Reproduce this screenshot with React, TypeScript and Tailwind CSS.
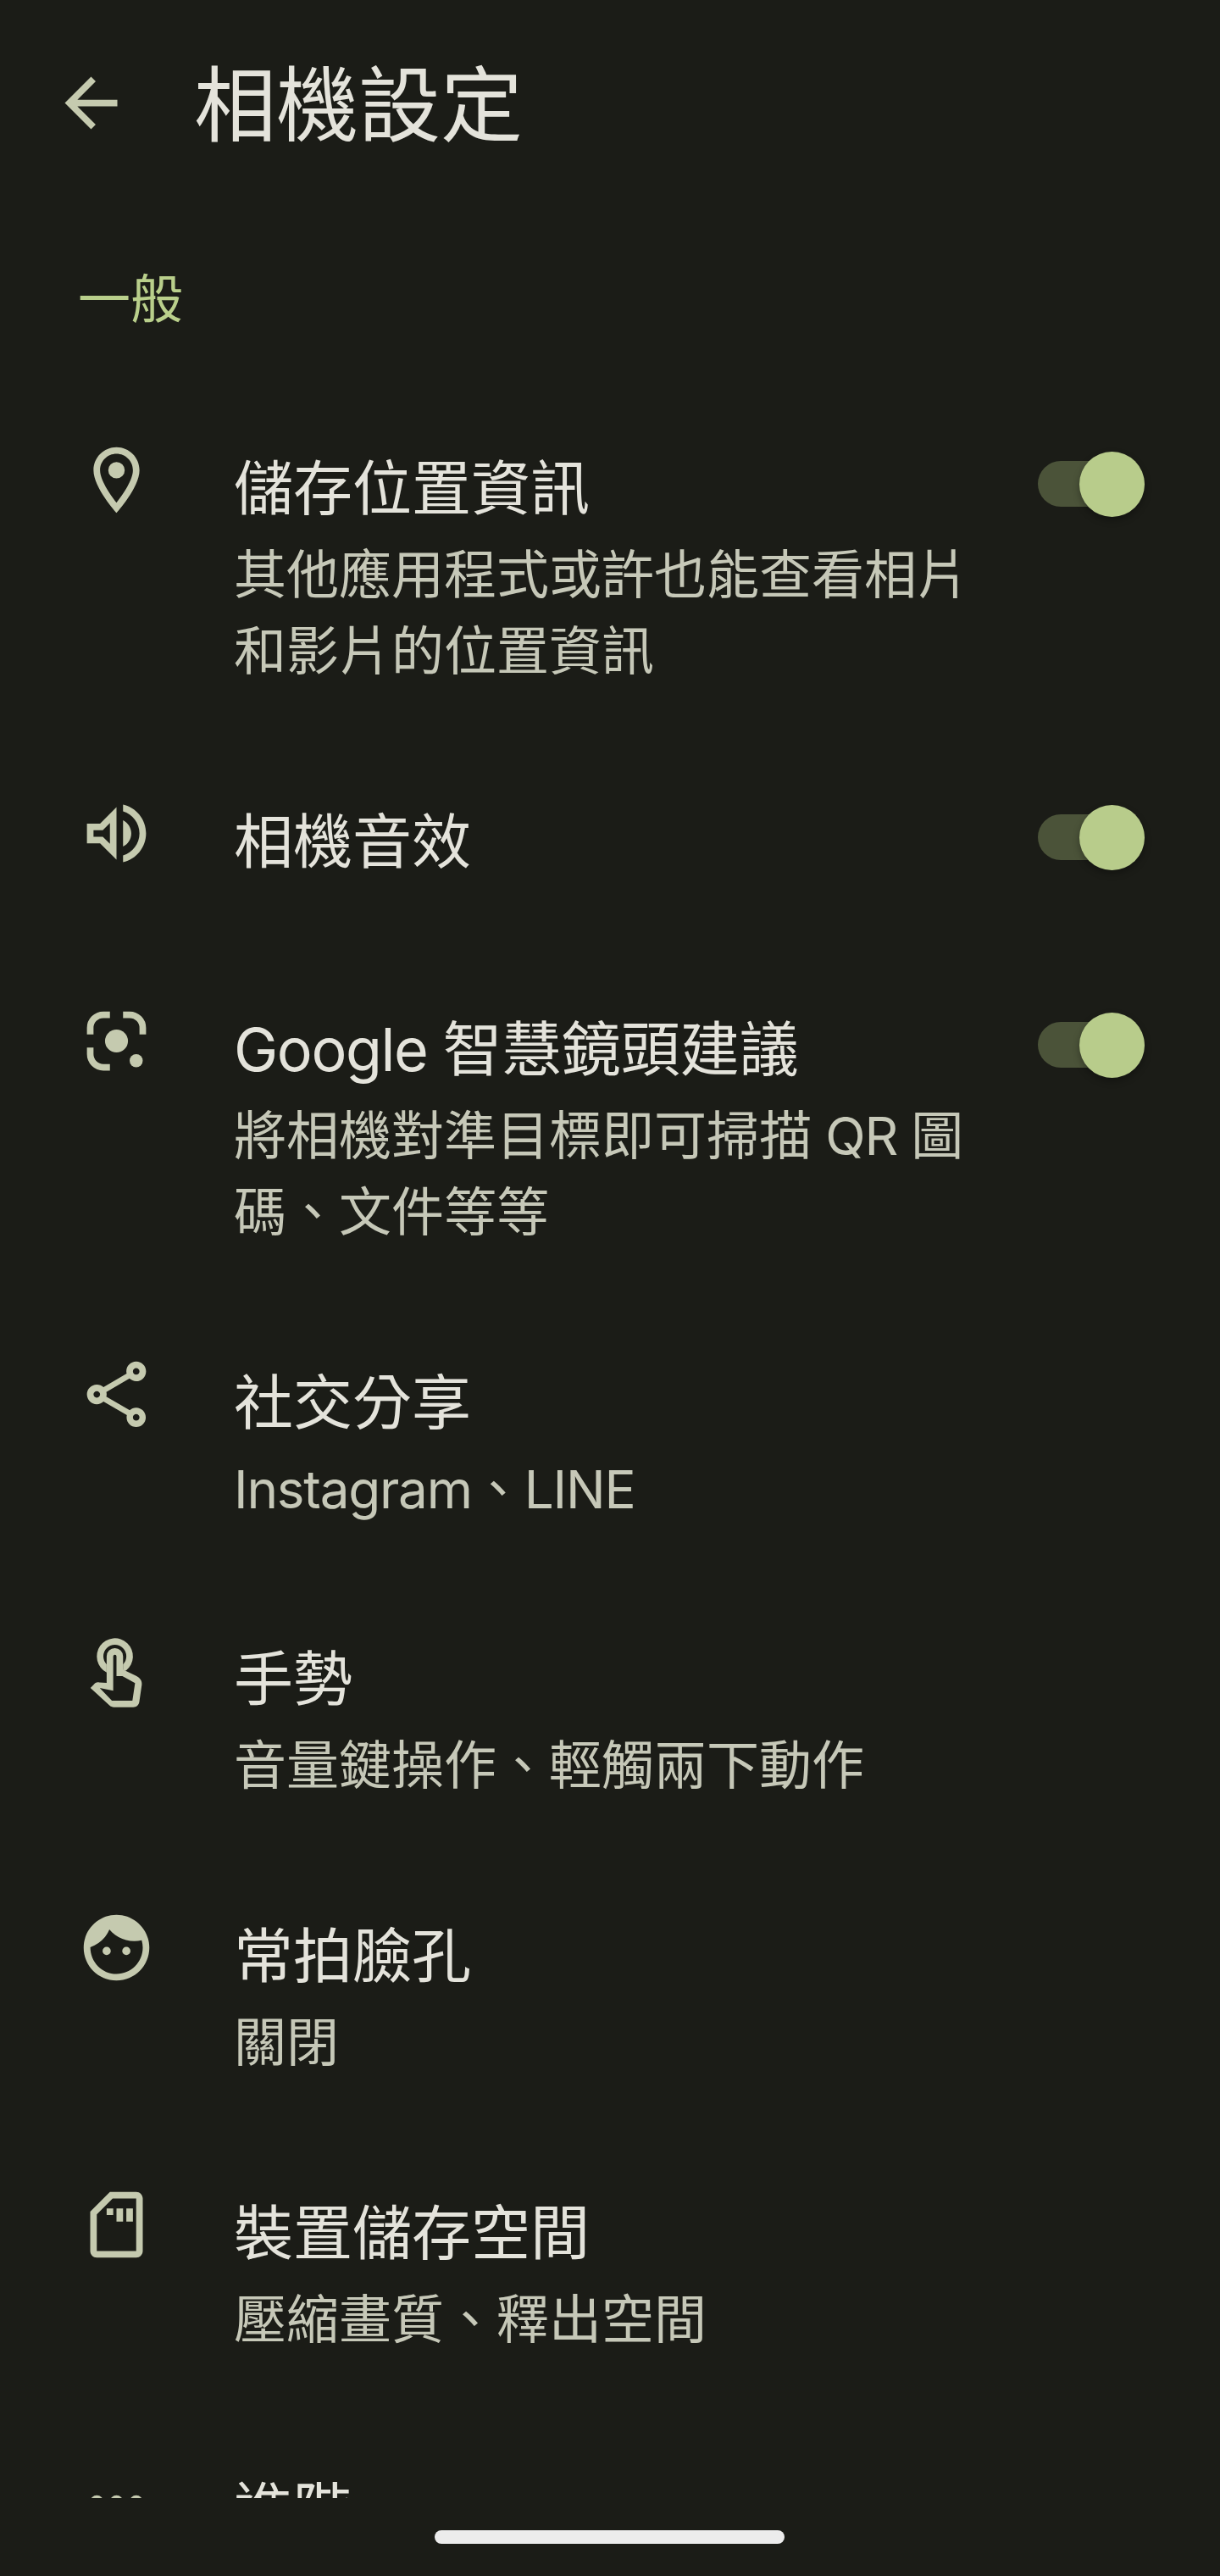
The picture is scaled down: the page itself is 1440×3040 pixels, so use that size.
import { useState, type ReactNode } from "react"
import clsx from "clsx"

interface SettingItem {
  id: string
  icon: ReactNode
  title: ReactNode
  summary?: ReactNode
  toggle?: boolean
}

function Icon({ children, className }: { children: ReactNode; className?: string }) {
  return (
    <svg
      viewBox="0 0 24 24"
      fill="currentColor"
      aria-hidden="true"
      className={clsx("h-[93px] w-[93px] shrink-0 overflow-visible text-[#c5caaf]", className)}
    >
      {children}
    </svg>
  )
}

function Latin({ children }: { children: ReactNode }) {
  return <span className="tracking-[-0.02em]">{children}</span>
}

const settings: SettingItem[] = [
  {
    id: "location",
    icon: (
      <Icon>
        <path d="M12 2C8.13 2 5 5.13 5 9c0 5.25 7 13 7 13s7-7.75 7-13c0-3.87-3.13-7-7-7zM7 9c0-2.76 2.24-5 5-5s5 2.24 5 5c0 2.88-2.88 7.19-5 9.88C9.92 16.21 7 11.85 7 9z" />
        <circle cx="12" cy="9" r="2.5" />
      </Icon>
    ),
    title: "儲存位置資訊",
    summary: (
      <>
        其他應用程式或許也能查看相片
        <br />
        和影片的位置資訊
      </>
    ),
    toggle: true,
  },
  {
    id: "sound",
    icon: (
      <Icon>
        <path d="M3 9v6h4l5 5V4L7 9H3zm7-.17v6.34L7.83 13H5v-2h2.83L10 8.83zM16.5 12c0-1.77-1.02-3.29-2.5-4.03v8.05c1.48-.73 2.5-2.25 2.5-4.02zM14 3.23v2.06c2.89.86 5 3.54 5 6.71s-2.11 5.85-5 6.71v2.06c4.01-.91 7-4.49 7-8.77 0-4.28-2.99-7.86-7-8.77z" />
      </Icon>
    ),
    title: "相機音效",
    toggle: true,
  },
  {
    id: "lens",
    icon: (
      <Icon>
        <path
          d="M4 10V8a4 4 0 0 1 4-4h2M14 4h2a4 4 0 0 1 4 4v2M4 14v2a4 4 0 0 0 4 4h2"
          fill="none"
          stroke="currentColor"
          strokeWidth="2"
        />
        <circle cx="12" cy="12" r="3.5" />
        <circle cx="18" cy="18" r="2" />
      </Icon>
    ),
    title: (
      <>
        <Latin>Google </Latin>智慧鏡頭建議
      </>
    ),
    summary: (
      <>
        將相機對準目標即可掃描<Latin> QR </Latin>圖
        <br />
        碼、文件等等
      </>
    ),
    toggle: true,
  },
  {
    id: "share",
    icon: (
      <Icon>
        <path d="M18 16.08c-.76 0-1.44.3-1.96.77L8.91 12.7c.05-.23.09-.46.09-.7s-.04-.47-.09-.7l7.05-4.11c.54.5 1.25.81 2.04.81 1.66 0 3-1.34 3-3s-1.34-3-3-3-3 1.34-3 3c0 .24.04.47.09.7L8.04 9.81C7.5 9.31 6.79 9 6 9c-1.66 0-3 1.34-3 3s1.34 3 3 3c.79 0 1.5-.31 2.04-.81l7.12 4.16c-.05.21-.08.43-.08.65 0 1.61 1.31 2.92 2.92 2.92s2.92-1.31 2.92-2.92-1.31-2.92-2.92-2.92zM18 4c.55 0 1 .45 1 1s-.45 1-1 1-1-.45-1-1 .45-1 1-1zM6 13c-.55 0-1-.45-1-1s.45-1 1-1 1 .45 1 1-.45 1-1 1zm12 7.02c-.55 0-1-.45-1-1s.45-1 1-1 1 .45 1 1-.45 1-1 1z" />
      </Icon>
    ),
    title: "社交分享",
    summary: (
      <>
        <Latin>Instagram</Latin>、<Latin>LINE</Latin>
      </>
    ),
  },
  {
    id: "gesture",
    icon: (
      <Icon>
        <g transform="translate(0 1.15)">
          <path d="M9 8.95V11.4A5.5 5.5 0 1 1 14.9 10.83L14 11V8.95A3.5 3.5 0 1 0 9 8.95z" />
          <path
            fillRule="evenodd"
            d="M9 14.6V6.5a2.5 2.5 0 0 1 5 0v4.05l.9.4 3.1 1.5c1.2.6 1.85 1.5 1.7 2.8l-.75 5.1c-.15 1-.85 1.65-1.85 1.65h-5.9c-.5 0-1-.2-1.35-.55l-5.78-5.3.95-1c.45-.5.9-.85 1.7-.7zM11 17l-4.1-.85L10.6 20h6.25l.8-5.35-3.85-2.11H12V6.5a.5.5 0 0 0-1 0z"
          />
        </g>
      </Icon>
    ),
    title: "手勢",
    summary: "音量鍵操作、輕觸兩下動作",
  },
  {
    id: "faces",
    icon: (
      <Icon>
        <path
          fillRule="evenodd"
          d="M12 2C6.48 2 2 6.48 2 12s4.48 10 10 10 10-4.48 10-10S17.52 2 12 2zm0 18c-4.38 0-7.95-3.55-7.97-8.15 2.7-.9 4.8-2.9 5.8-5.4C11.7 8.65 14.4 10 17.42 10c.78 0 1.53-.09 2.25-.26.21.71.33 1.47.33 2.26 0 4.41-3.59 8-8 8z"
        />
        <circle cx="9" cy="13" r="1.25" />
        <circle cx="15" cy="13" r="1.25" />
      </Icon>
    ),
    title: "常拍臉孔",
    summary: "關閉",
  },
  {
    id: "storage",
    icon: (
      <Icon>
        <path d="M18 2h-8L4 8v12c0 1.1.9 2 2 2h12c1.1 0 2-.9 2-2V4c0-1.1-.9-2-2-2zm0 18H6V8.83L10.83 4H18v16z" />
        <path d="M9 7h2v2H9zM12 7h2v4h-2zM15 7h2v4h-2z" />
      </Icon>
    ),
    title: "裝置儲存空間",
    summary: "壓縮畫質、釋出空間",
  },
  {
    id: "advanced",
    icon: (
      <Icon>
        <circle cx="6" cy="12" r="2" />
        <circle cx="12" cy="12" r="2" />
        <circle cx="18" cy="12" r="2" />
      </Icon>
    ),
    title: "進階",
  },
]

function Toggle() {
  const [on, setOn] = useState(true)

  return (
    <button
      type="button"
      role="switch"
      aria-checked={on}
      onClick={() => setOn(!on)}
      className="relative mt-[13px] ml-auto h-[77px] w-[126px] shrink-0"
    >
      <span className="absolute inset-x-0 top-[11px] h-[54px] rounded-full bg-[#4b5339]" />
      <span
        className={clsx(
          "absolute top-0 h-[77px] w-[77px] rounded-full shadow-[0_4px_8px_rgba(0,0,0,0.3)]",
          on ? "right-0 bg-[#b8cc8b]" : "left-0 bg-[#909283]",
        )}
      />
    </button>
  )
}

function SettingRow({ item }: { item: SettingItem }) {
  return (
    <li className="flex min-h-[245px] items-start pt-16 pr-[89px] pb-[58.75px] pl-[91px]">
      {item.icon}
      <div className="mt-1.5 ml-[92px] w-[890px] shrink-0">
        <p className="text-[70px] leading-[102px] text-[#e4e3db]">{item.title}</p>
        {item.summary && (
          <p className="mt-1.5 text-[62px] leading-[90px] text-[#c6c8b8]">{item.summary}</p>
        )}
      </div>
      {item.toggle && <Toggle />}
    </li>
  )
}

export default function App() {
  return (
    <div
      lang="zh-Hant"
      className="h-[3040px] w-[1440px] overflow-hidden bg-[#1b1c17] font-['Inter','Noto_Sans_CJK_TC',sans-serif]"
    >
      <main className="h-[2948px] overflow-hidden">
        <header className="flex items-start pt-12 pl-[61px]">
          <Icon className="mt-[27px]">
            <path d="M20 11H7.83l5.59-5.59L12 4l-8 8 8 8 1.41-1.41L7.83 13H20v-2z" />
          </Icon>
          <h1 className="mt-1.5 ml-[75px] text-[97px] leading-[140px] text-[#e4e3db]">相機設定</h1>
        </header>
        <h2 className="mt-[114.5px] mb-[57.5px] pl-[92px] text-[62px] leading-[90px] text-[#b9cf8b]">一般</h2>
        <ul>
          {settings.map((item) => (
            <SettingRow key={item.id} item={item} />
          ))}
        </ul>
      </main>
      <div className="mt-[38px] ml-[513px] h-4 w-[413px] rounded-full bg-[#ececec]" />
    </div>
  )
}
